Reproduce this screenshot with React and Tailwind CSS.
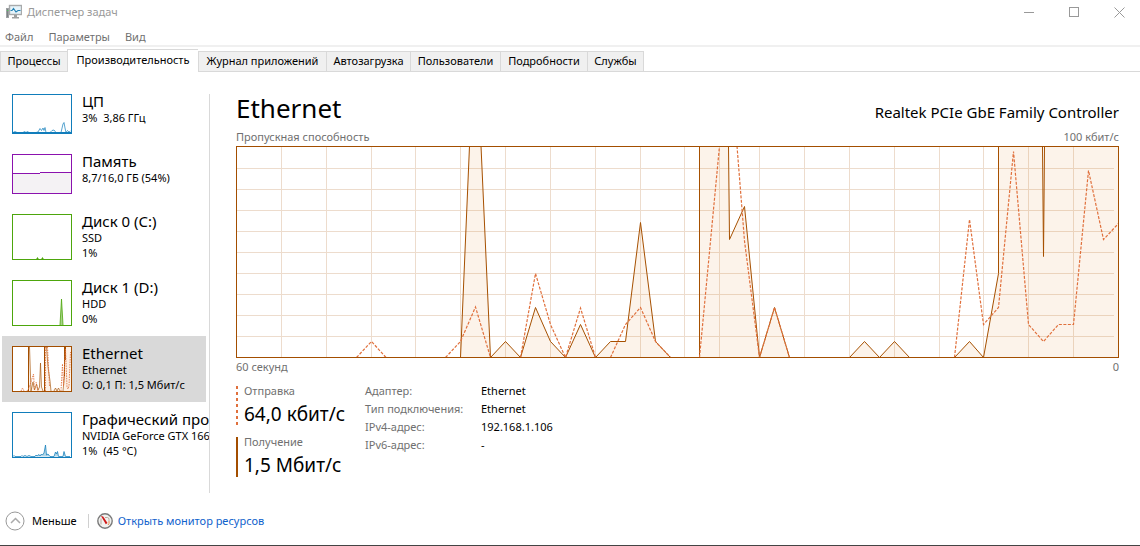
import React from "react";

const TABS = [
  { name: "Процессы", size: "w-[67px]" },
  { name: "Производительность", size: "w-[131px]", active: true },
  { name: "Журнал приложений", size: "w-[128px]" },
  { name: "Автозагрузка", size: "w-[84px]" },
  { name: "Пользователи", size: "w-[90px]" },
  { name: "Подробности", size: "w-[87px]" },
  { name: "Службы", size: "w-[57px]" },
];

const RECEIVED =
  "M224.5 211.5L233.5 0H245L254.5 211.5L269.5 195.5L284.5 211.5L299.5 161.5L314.5 195.5L329.5 211.5L344.5 178.5L359.5 211.5L374.5 195.5H389.5L404.5 76.5L419.5 195.5L434.5 211.5H463.5V0H492.5L493.5 93.5L508.5 60.5L523.5 211.5L538.5 161.5L553.5 211.5H613.5L628.5 195.5L643.5 211.5L658.5 195.5L673.5 211.5H718.5L733.5 195.5L747.5 211.5L762.5 127.5V0H806.5L807.5 110.5L808.5 0H882.5";

const SENT =
  "M120.5 211.5L135.5 195.5L150 211.5M209.5 211.5L224.5 195.5L239.5 161L254.5 211.5M284.5 211.5L299.5 127.5L314.5 178.5L329.5 211.5L344.5 162L359.5 211.5M374.5 211.5L389.5 178.5L404.5 161.5L419.5 195.5L434.5 211.5M463.5 211.5L483.5 0M501 0L508.5 95L523.5 211.5L538.5 161.5L553.5 211.5M718.5 211.5L733.5 73.5L747.5 178.5L762.5 161.5L777.5 5.5L792.5 178.5L807.5 195.5L822.5 178.5H837.5L852.5 24.5L867.5 93.5L882.5 77.5";

const COLUMNS = [45.5, 90.5, 135.5, 179.5, 224.5, 269.5, 314.5, 359.5, 404.5, 448.5, 483.5, 523.5, 568.5, 613.5, 658.5, 703.5, 747.5, 792.5, 837.5];
const LINES = [22.5, 43.5, 64.5, 85.5, 106.5, 127.5, 148.5, 169.5, 190.5];

function NetworkChart() {
  return (
    <svg viewBox="0 0 883 212" preserveAspectRatio="none" className="block h-[212px] w-full" fill="none" role="img" aria-label="Пропускная способность">
      <g stroke="#eddccd">
        {COLUMNS.map((x) => (
          <path key={x} d={`M${x} 1V211`} />
        ))}
        {LINES.map((y) => (
          <path key={y} d={`M1 ${y}H878`} />
        ))}
      </g>
      <path d={`${RECEIVED}V211.5H224.5Z`} fill="#e07818" fillOpacity="0.09" />
      <path d={RECEIVED} stroke="#a65000" />
      <path d={SENT} stroke="#e0703c" strokeDasharray="3 1.5" strokeWidth="1.2" />
      <rect x="0.5" y="0.5" width="882" height="211" stroke="#a34e00" />
    </svg>
  );
}

function Thumb({ color, tall, children }) {
  return (
    <svg viewBox={tall ? "0 0 60 46" : "0 0 60 40"} className={`block w-[60px] shrink-0 bg-white ${tall ? "h-[46px]" : "h-10"}`} fill="none" stroke={color}>
      {children}
      <rect x="0.5" y="0.5" width="59" height={tall ? 45 : 39} />
    </svg>
  );
}

const ITEMS = [
  {
    title: "ЦП",
    lines: ["3%  3,86 ГГц"],
    thumb: (
      <Thumb color="#117dbb">
        <path strokeOpacity="0.7" d="M1 38.5L3 37.5L5 38.5H11L12.5 37.5L14 38.5L15.5 37.5L17 38.5H24L26 38L28 34.5L29.5 36.5L31 34L32 36.5L33 33.5L34 38.5H38L40 36.5L42 36L44 38.5H49L51 30L52 28.5L53 34L54 38.5L55.5 36.5L57 38L58.5 37" />
        <path d="M1 38.5H59" />
      </Thumb>
    ),
  },
  {
    title: "Память",
    lines: ["8,7/16,0 ГБ (54%)"],
    thumb: (
      <Thumb color="#8b12ae">
        <path d="M1 19.5H28V18.5H59V39H1Z" fill="#f4f2f4" stroke="none" />
        <path d="M1 19.5H28M28 18.5H59" />
      </Thumb>
    ),
  },
  {
    title: "Диск 0 (C:)",
    lines: ["SSD", "1%"],
    thumb: (
      <Thumb color="#4da60c" tall>
        <path d="M24 45L25.5 43.5L27 45ZM29 45L30.5 43.5L32 45Z" fill="#4da60c" stroke="none" />
        <path d="M25.5 45V43.5M30.5 45V43.5" />
      </Thumb>
    ),
  },
  {
    title: "Диск 1 (D:)",
    lines: ["HDD", "0%"],
    thumb: (
      <Thumb color="#4da60c" tall>
        <path d="M48 45L49.5 19L51 45" fill="#a7d388" strokeOpacity="0.8" />
      </Thumb>
    ),
  },
  {
    title: "Ethernet",
    lines: ["Ethernet", "О: 0,1 П: 1,5 Мбит/с"],
    selected: true,
    thumb: (
      <Thumb color="#a34e00" tall>
        <path d="M16.5 45V1H18L19 45L20 42L21 37L22.5 42L24 39L25 43L27 42L28.5 17L29.5 43L33 45V1H35L38 35L39 45L42 43L44 44L46 43L48 45L52 44L53.5 1H59V45Z" fill="#e07818" fillOpacity="0.1" stroke="none" />
        <path d="M17.5 1L19 45L21 36L22.5 44L24.5 38L26 44L27.5 41L28.5 17L29.5 41L31 45M34.5 1L36 21L38 35L39 45M42 45L43.5 42L45 45L46.5 42L48 45M51 45L52.5 30" strokeOpacity="0.65" />
        <path d="M16.5 45V1M32.5 45V1M52.5 30V1M53.5 14V1" />
        <path d="M9 45L10.5 42L12 45M15 45L17 42L21.5 28L22.5 44M24 36L26 45M33.5 45V1M35.5 1L37.5 40M49 45L50.5 18L51.5 40L53.5 3L55 41L56 43L57 40L58.5 6" stroke="#e0703c" strokeDasharray="1.5 1" strokeOpacity="0.85" />
      </Thumb>
    ),
  },
  {
    title: "Графический про",
    lines: ["NVIDIA GeForce GTX 166", "1%  (45 °C)"],
    thumb: (
      <Thumb color="#117dbb" tall>
        <path strokeOpacity="0.75" fill="#69adcf" fillOpacity="0.5" d="M1 44.5L2 43.5L3 44.5H9L10 43.5L11 44.5L13 43.5L15 44.5L17 43.5L19 44.5H23L24 43L25 44L27 42.5L28 44L29.5 42L30.5 43L32 41L33.5 33L34.5 43L36 42L38 44.5H42L43.5 40L44.5 42L45.5 39.5L46.5 44.5H51L52 39.5L53.5 44.5H58" />
      </Thumb>
    ),
  },
];

function Sidebar() {
  return (
    <nav className="my-[-10px] w-[209px] shrink-0 overflow-hidden pl-[2px]">
      {ITEMS.map((item) => (
        <button
          key={item.title}
          type="button"
          className={`flex w-[204px] gap-[10px] py-[10px] pl-[10px] text-left whitespace-nowrap ${item.selected ? "bg-[#d9d9d9]" : ""}`}
        >
          {item.thumb}
          <span className="-my-[2px] block">
            <span className="block text-[15px] leading-[18px]">{item.title}</span>
            {item.lines.map((line) => (
              <span key={line} className="block text-[11px] leading-[15px] whitespace-pre">
                {line}
              </span>
            ))}
          </span>
        </button>
      ))}
    </nav>
  );
}

function AppIcon() {
  return (
    <svg viewBox="0 0 16 16" className="h-4 w-4 shrink-0" fill="none" aria-hidden="true">
      <rect x="0.5" y="4.5" width="2" height="9" fill="#7d8285" stroke="#9da1a3" />
      <path d="M1 6.5H2.5" stroke="#55c065" />
      <rect x="3.5" y="1.5" width="12" height="9" fill="#e6f4fb" stroke="#a8aaab" strokeWidth="1.4" />
      <path d="M4.5 6.5H6L7.5 4.5L10 8L12 6.5H14.5" stroke="#2583b5" strokeWidth="1.2" />
      <path d="M8 11H11V13H13V14.5H6V13H8Z" fill="#9d9f9f" />
    </svg>
  );
}

function GaugeIcon() {
  return (
    <svg viewBox="0 0 16 16" className="h-4 w-4" fill="none" aria-hidden="true">
      <circle cx="8" cy="8" r="7.2" fill="#f1f1ef" stroke="#7a7a7a" strokeWidth="1.4" />
      <path d="M4 11.5V5.5M8 4.5H10.5Q12 4.5 12 6.5V8" stroke="#b8aca0" />
      <path d="M12 8V10.5L11 12" stroke="#e58a4a" />
      <path d="M4 3L6.2 3.4L10.5 10L8.8 11.2Z" fill="#d01818" />
    </svg>
  );
}

function Metric({ label, value, dashed }) {
  return (
    <div className="flex h-10 gap-[6px]">
      <svg viewBox="0 0 2 40" className="h-10 w-[2px] shrink-0" aria-hidden="true">
        <path d="M1 0V40" stroke={dashed ? "#e0703c" : "#a34e00"} strokeWidth="2" strokeDasharray={dashed ? "3 3" : undefined} />
      </svg>
      <div className="whitespace-nowrap">
        <div className="text-[11px] leading-[10px] text-[#707070]">{label}</div>
        <div className="text-[19px] leading-9">{value}</div>
      </div>
    </div>
  );
}

const DETAILS = [
  ["Адаптер:", "Ethernet"],
  ["Тип подключения:", "Ethernet"],
  ["IPv4-адрес:", "192.168.1.106"],
  ["IPv6-адрес:", "-"],
];

export default function App() {
  return (
    <div className="flex min-h-screen flex-col border-b border-[#444] bg-white font-['Noto_Sans',sans-serif] text-[11px] text-black">
      <header className="flex h-6 items-center justify-between pr-[15px] pl-[6px] text-[#999]">
        <div className="flex items-center gap-[5px]">
          <AppIcon />
          <span>Диспетчер задач</span>
        </div>
        <div className="flex gap-[34px]">
          <button type="button" aria-label="Свернуть">
            <svg viewBox="0 0 11 11" className="h-[11px] w-[11px]" stroke="currentColor"><path d="M0 5.5H10" /></svg>
          </button>
          <button type="button" aria-label="Развернуть">
            <svg viewBox="0 0 11 11" className="h-[11px] w-[11px]" fill="none" stroke="currentColor"><rect x="0.5" y="0.5" width="9" height="9" /></svg>
          </button>
          <button type="button" aria-label="Закрыть">
            <svg viewBox="0 0 11 11" className="h-[11px] w-[11px]" stroke="currentColor"><path d="M0.5 0.5L10.5 10.5M10.5 0.5L0.5 10.5" /></svg>
          </button>
        </div>
      </header>

      <div className="flex h-[23px] items-center gap-[15px] border-b-2 border-[#f0f0f0] pt-[6px] pl-[5px] text-[#707070]">
        <button type="button">Файл</button>
        <button type="button">Параметры</button>
        <button type="button">Вид</button>
      </div>

      <div className="flex h-[25px] items-end" role="tablist">
        {TABS.map((tab) => (
          <button
            key={tab.name}
            type="button"
            role="tab"
            aria-selected={Boolean(tab.active)}
            className={`shrink-0 border-t border-l border-[#d9d9d9] whitespace-nowrap last-of-type:border-r ${tab.size} ${
              tab.active ? "h-[23px] bg-white pb-[2px]" : "h-[21px] border-b bg-[#f0f0f0]"
            }`}
          >
            {tab.name}
          </button>
        ))}
        <div className="flex-1 border-b border-[#d9d9d9]" />
      </div>

      <main className="mt-[22px] flex flex-1">
        <Sidebar />
        <section className="flex min-w-0 flex-1 flex-col border-l border-[#d9d9d9] pr-[21px] pl-[26px]">
          <div className="flex items-center justify-between">
            <h1 className="text-[26px] leading-7">Ethernet</h1>
            <div className="pt-2 text-[15px] leading-5">Realtek PCIe GbE Family Controller</div>
          </div>
          <div className="mt-[7px] flex h-[17px] items-center justify-between text-[#707070]">
            <span>Пропускная способность</span>
            <span>100 кбит/с</span>
          </div>
          <NetworkChart />
          <div className="flex h-[18px] items-center justify-between text-[#707070]">
            <span>60 секунд</span>
            <span>0</span>
          </div>
          <div className="flex pt-[10px]">
            <div className="flex w-[129px] flex-col gap-[11px]">
              <Metric label="Отправка" value="64,0 кбит/с" dashed />
              <Metric label="Получение" value="1,5 Мбит/с" />
            </div>
            <dl className="-mt-1 grid grid-cols-[116px_auto] content-start leading-[18px]">
              {DETAILS.map(([name, value]) => (
                <React.Fragment key={name}>
                  <dt className="text-[#707070]">{name}</dt>
                  <dd>{value}</dd>
                </React.Fragment>
              ))}
            </dl>
          </div>
        </section>
      </main>

      <footer className="mt-1 flex h-12 items-center pl-[5px]">
        <button type="button" className="flex items-center gap-[7px]">
          <svg viewBox="0 0 20 20" className="h-5 w-5" fill="none" aria-hidden="true">
            <circle cx="10" cy="10" r="9" stroke="#999" />
            <path d="M6 12L10.500 7.500L15 12" stroke="#aaa" strokeWidth="1.500" />
          </svg>
          Меньше
        </button>
        <span className="mr-2 ml-[11px] h-[14px] w-px bg-[#d0d0d0]" />
        <a href="#resmon" className="flex items-center gap-[5px] text-[#0f62cc]">
          <GaugeIcon />
          Открыть монитор ресурсов
        </a>
      </footer>
    </div>
  );
}
